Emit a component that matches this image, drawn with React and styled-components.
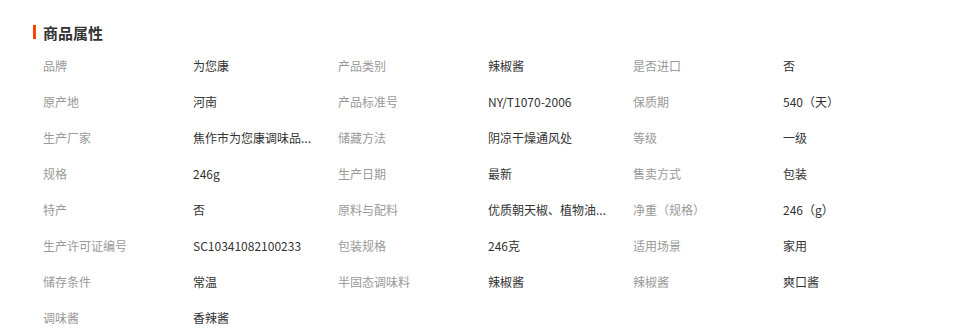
import React from "react";
import styled, { createGlobalStyle } from "styled-components";

const GlobalStyle = createGlobalStyle`
  body {
    margin: 0;
    background: #fff;
    font-family: "Noto Sans CJK SC", "Noto Sans", sans-serif;
  }
`;

const Section = styled.div`
  width: 958px;
  height: 336px;
  padding: 22px 0 0 33px;
  box-sizing: border-box;
  overflow: hidden;
`;

const Title = styled.h3`
  display: flex;
  align-items: center;
  margin: 0;
  height: 20px;
  font-size: 15px;
  font-weight: bold;
  color: #333;
  &::before {
    content: "";
    width: 3px;
    height: 14px;
    background: #ff4400;
    margin-right: 7px;
  }
`;

const Grid = styled.ul`
  display: grid;
  grid-template-columns: repeat(3, 150px 145px);
  margin: 6px 0 0 10px;
  padding: 0;
  list-style: none;
`;

const Cell = styled.li`
  height: 36px;
  line-height: 36px;
  font-size: 12px;
  color: ${(p) => (p.$label ? "#999" : "#333")};
  white-space: nowrap;
`;

// long values are shown already shortened, as in the shop page
const attrs = [
  ["品牌", "为您康"],
  ["产品类别", "辣椒酱"],
  ["是否进口", "否"],
  ["原产地", "河南"],
  ["产品标准号", "NY/T1070-2006"],
  ["保质期", "540（天）"],
  ["生产厂家", "焦作市为您康调味品..."],
  ["储藏方法", "阴凉干燥通风处"],
  ["等级", "一级"],
  ["规格", "246g"],
  ["生产日期", "最新"],
  ["售卖方式", "包装"],
  ["特产", "否"],
  ["原料与配料", "优质朝天椒、植物油..."],
  ["净重（规格）", "246（g）"],
  ["生产许可证编号", "SC10341082100233"],
  ["包装规格", "246克"],
  ["适用场景", "家用"],
  ["储存条件", "常温"],
  ["半固态调味料", "辣椒酱"],
  ["辣椒酱", "爽口酱"],
  ["调味酱", "香辣酱"],
];

export default function App() {
  return (
    <>
      <GlobalStyle />
      <Section>
        <Title>商品属性</Title>
        <Grid>
          {attrs.map(([k, v]) => (
            <React.Fragment key={k}>
              <Cell $label>{k}</Cell>
              <Cell>{v}</Cell>
            </React.Fragment>
          ))}
        </Grid>
      </Section>
    </>
  );
}
